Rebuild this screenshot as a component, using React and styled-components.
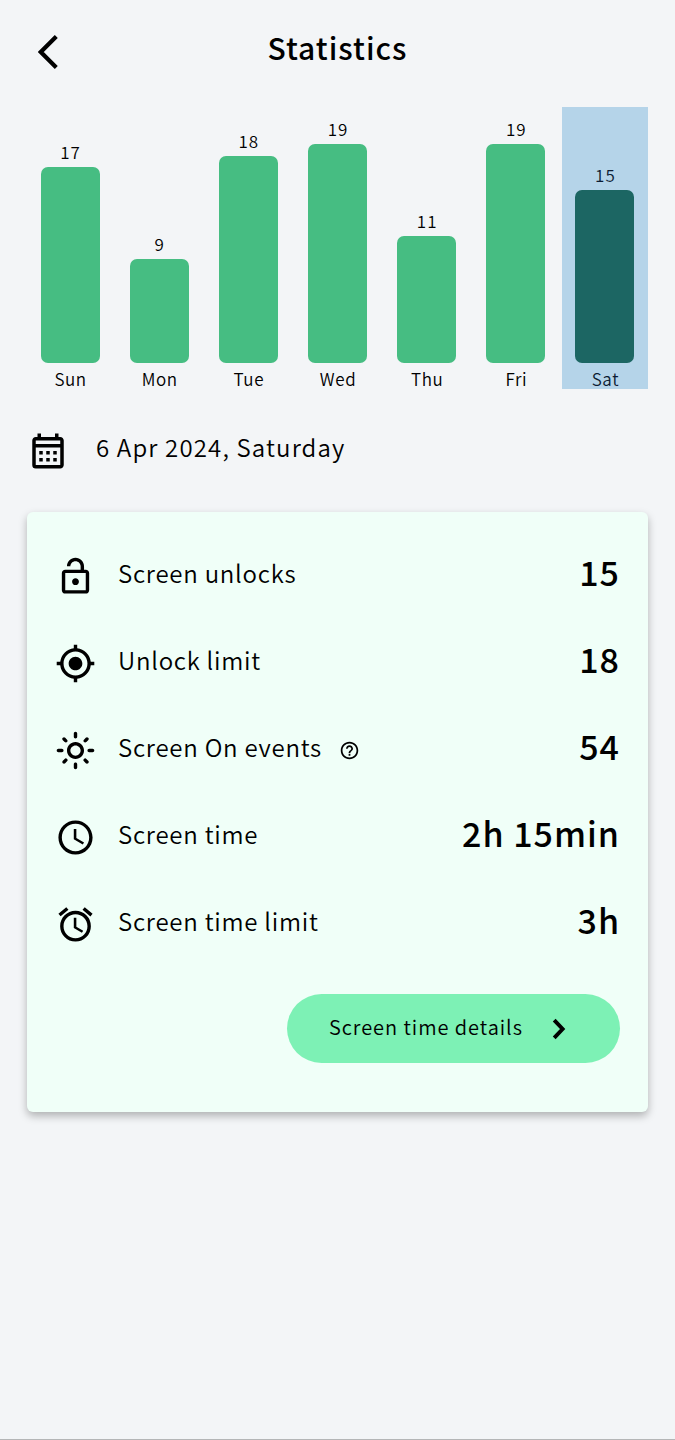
import React from "react";
import styled, {createGlobalStyle} from "styled-components";
import {
    MdOutlineCalendarMonth,
    MdOutlineLockOpen,
    MdGpsFixed,
    MdOutlineLightMode,
    MdAccessTime,
    MdAccessAlarm,
    MdHelpOutline,
} from "react-icons/md";

const week = [
    {day: "Sun", count: 17},
    {day: "Mon", count: 9},
    {day: "Tue", count: 18},
    {day: "Wed", count: 19},
    {day: "Thu", count: 11},
    {day: "Fri", count: 19},
    {day: "Sat", count: 15},
];

const stats = [
    {icon: MdOutlineLockOpen, label: "Screen unlocks", value: "15"},
    {icon: MdGpsFixed, label: "Unlock limit", value: "18"},
    {icon: MdOutlineLightMode, label: "Screen On events", value: "54", help: true},
    {icon: MdAccessTime, label: "Screen time", value: "2h 15min"},
    {icon: MdAccessAlarm, label: "Screen time limit", value: "3h"},
];

const UNIT = 11.52;

const App = () => {
    const selected = "Sat";

    return <Wrapper>
        <GlobalStyle/>
        <Header>
            <BackButton aria-label="Back">
                <svg width="20" height="34" viewBox="0 0 20 34">
                    <path d="M18.3 1.6L2.8 17l15.5 15.4" fill="none" stroke="#000" strokeWidth="4.2"/>
                </svg>
            </BackButton>
            <Title>Statistics</Title>
        </Header>
        <Chart>
            {week.map(({day, count}) => (
                <Column key={day} $selected={day === selected}>
                    <Count>{count}</Count>
                    <Bar $selected={day === selected} style={{height: count * UNIT}}/>
                    <Day>{day}</Day>
                </Column>
            ))}
        </Chart>
        <DateRow>
            <MdOutlineCalendarMonth size={42}/>
            <DateText>6 Apr 2024, Saturday</DateText>
        </DateRow>
        <Card>
            {stats.map(({icon: Icon, label, value, help}) => (
                <Row key={label}>
                    <Icon size={41}/>
                    <Label>{label}</Label>
                    {help && <Help><MdHelpOutline size={21}/></Help>}
                    <Value>{value}</Value>
                </Row>
            ))}
            <DetailsButton>
                <span>Screen time details</span>
                <svg width="14" height="22" viewBox="0 0 14 22">
                    <path d="M2.2 2.2L10.6 11l-8.4 8.8" fill="none" stroke="#000" strokeWidth="3.9"/>
                </svg>
            </DetailsButton>
        </Card>
    </Wrapper>
}

const GlobalStyle = createGlobalStyle`
    * {
        box-sizing: border-box;
    }
    body {
        margin: 0;
        background: #f3f5f7;
    }
`

const Wrapper = styled.div`
    width: 100%;
    height: 1440px;
    padding: 0 27px;
    border-bottom: 1px solid #b4b6b7;
    background: #f3f5f7;
    color: #000;
    font-family: "Noto Sans CJK SC", "Noto Sans", sans-serif;
    font-weight: 350;
`

const Header = styled.header`
    display: grid;
    grid-template-columns: 60px 1fr 60px;
    align-items: center;
    height: 107px;
    padding-bottom: 4px;
`

const BackButton = styled.button`
    display: flex;
    width: 42px;
    padding: 0 0 0 11px;
    border: none;
    background: none;
`

const Title = styled.h1`
    margin: 0;
    padding-bottom: 9px;
    text-align: center;
    font-weight: 500;
    font-size: 30px;
    line-height: 40px;
    letter-spacing: 1px;
`

const Chart = styled.div`
    display: flex;
    gap: 3px;
    height: 282px;
`

const Column = styled.div`
    display: flex;
    flex: 1;
    flex-direction: column;
    align-items: center;
    justify-content: flex-end;
    background: ${({$selected}) => $selected ? "#b5d4e9" : "transparent"};
    color: ${({$selected}) => $selected ? "#0c1c33" : "#000"};
`

const Count = styled.span`
    padding: 0 0 1px 1px;
    font-size: 17px;
    line-height: 28px;
    letter-spacing: 1px;
`

const Bar = styled.div`
    width: 59px;
    border-radius: 7px;
    background: ${({$selected}) => $selected ? "#1c6663" : "#46bd82"};
`

const Day = styled.span`
    height: 26px;
    padding-left: 1px;
    font-size: 17px;
    line-height: 32px;
    letter-spacing: 0.6px;
`

const DateRow = styled.div`
    display: flex;
    align-items: center;
    height: 123px;
`

const DateText = styled.span`
    margin-left: 27px;
    padding-bottom: 8px;
    font-size: 24px;
    line-height: 36px;
    letter-spacing: 1.15px;
`

const Card = styled.section`
    display: flex;
    flex-direction: column;
    height: 600px;
    padding: 21px 28px 0;
    border-radius: 6px;
    background: #f0fff8;
    box-shadow: 0 4px 9px rgba(0, 0, 0, 0.28);
`

const Row = styled.div`
    display: flex;
    align-items: center;
    height: 87px;
`

const Label = styled.span`
    margin-left: 22px;
    padding-bottom: 7px;
    font-size: 24px;
    line-height: 36px;
    letter-spacing: 0.75px;
`

const Help = styled.span`
    display: flex;
    margin-left: 17px;
`

const Value = styled.span`
    margin-left: auto;
    padding-bottom: 9px;
    font-weight: 500;
    font-size: 34px;
    line-height: 44px;
    letter-spacing: 1px;
`

const DetailsButton = styled.button`
    display: flex;
    align-items: center;
    align-self: flex-end;
    justify-content: space-between;
    width: 333px;
    height: 69px;
    margin-top: 26px;
    padding: 0 54px 0 42px;
    border: none;
    border-radius: 35px;
    background: #7df1b5;
    color: #000;
    font-family: inherit;
    font-weight: 350;
    font-size: 20px;
    letter-spacing: 0.95px;

    span {
        padding-bottom: 4px;
    }
`

export default App
